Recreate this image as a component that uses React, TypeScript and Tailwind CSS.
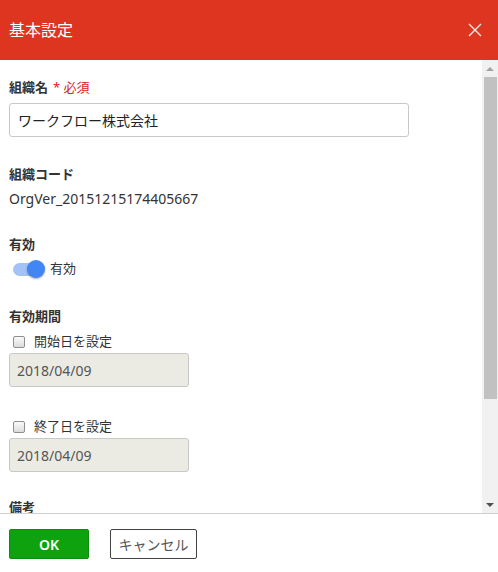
import React from "react";

const font = { fontFamily: '"Noto Sans", "Noto Sans CJK JP", sans-serif' };

const Label: React.FC<{ children: React.ReactNode }> = ({ children }) => (
  <div className="h-5 flex items-center text-[13px] font-bold text-[#333]">{children}</div>
);

const DateBox: React.FC<{ value: string }> = ({ value }) => (
  <div className="w-[180px] h-[34px] mt-[1px] flex items-center pl-[7px] bg-[#ebebe4] border border-[#c8c8c8] rounded-[3px] text-[14px] text-[#555]">
    {value}
  </div>
);

const CheckRow: React.FC<{ text: string }> = ({ text }) => (
  <div className="h-5 flex items-center">
    <span className="ml-[4px] w-[12px] h-[12px] rounded-[2px] border border-[#8f8f8f] bg-gradient-to-b from-[#fafafa] to-[#dcdcdc]" />
    <span className="ml-[9px] text-[13px] text-[#333]">{text}</span>
  </div>
);

export default function App() {
  return (
    <div className="w-[498px] h-[572px] bg-white flex flex-col overflow-hidden" style={font}>
      {/* ヘッダー */}
      <div className="h-[60px] shrink-0 bg-[#dd3520] flex items-center justify-between pl-[9px] pr-[16px]">
        <span className="text-white text-[16px] leading-none">基本設定</span>
        <svg width="14" height="14" viewBox="0 0 14 14" className="opacity-90">
          <path d="M1 1L13 13M13 1L1 13" stroke="#fff" strokeWidth="1.4" />
        </svg>
      </div>

      {/* 本文 + スクロールバー */}
      <div className="h-[453px] shrink-0 flex">
        <div className="flex-1 overflow-hidden pl-[9px] pt-[18px]">
          <Label>
            組織名<span className="ml-[5px] text-[#e02020] font-normal">* 必須</span>
          </Label>
          <div className="mt-[5px] w-[400px] h-[34px] flex items-center pl-[8px] border border-[#c8c8c8] rounded-[3px] text-[14px] text-[#222]">
            ワークフロー株式会社
          </div>

          <div className="mt-[28px]">
            <Label>組織コード</Label>
            <div className="mt-[3px] h-5 flex items-center text-[14px] text-[#333]">OrgVer_20151215174405667</div>
          </div>

          <div className="mt-[27px]">
            <Label>有効</Label>
            <div className="mt-[4px] h-5 flex items-center">
              <div className="relative ml-[4px] w-[32px] h-[20px] flex items-center">
                <div className="w-[30px] h-[13px] rounded-full bg-[#a3c2f7]" />
                <div className="absolute left-[14px] top-[1px] w-[18px] h-[18px] rounded-full bg-[#4285f4] shadow-[0_1px_2px_rgba(0,0,0,0.35)]" />
              </div>
              <span className="ml-[5px] text-[13px] text-[#333]">有効</span>
            </div>
          </div>

          <div className="mt-[28px]">
            <Label>有効期間</Label>
            <div className="mt-[5px]">
              <CheckRow text="開始日を設定" />
              <DateBox value="2018/04/09" />
            </div>
            <div className="mt-[30px]">
              <CheckRow text="終了日を設定" />
              <DateBox value="2018/04/09" />
            </div>
          </div>

          <div className="mt-[26px]">
            <Label>備考</Label>
            <div className="mt-[5px] w-[400px] h-[80px] border border-[#c8c8c8] rounded-[3px]" />
          </div>
        </div>

        <div className="w-[16px] shrink-0 bg-[#f1f1f1] flex flex-col items-center">
          <div className="h-[17px] flex items-center justify-center">
            <svg width="8" height="4" viewBox="0 0 8 4"><path d="M0 4L4 0L8 4Z" fill="#a3a3a3" /></svg>
          </div>
          <div className="w-[13px] ml-[1px] h-[322px] bg-[#c1c1c1]" />
          <div className="flex-1" />
          <div className="h-[17px] flex items-center justify-center">
            <svg width="8" height="4" viewBox="0 0 8 4"><path d="M0 0L8 0L4 4Z" fill="#505050" /></svg>
          </div>
        </div>
      </div>

      {/* フッター */}
      <div className="flex-1 border-t border-[#cfcfcf] pl-[9px] pt-[15px] flex items-start gap-[21px]">
        <button className="w-[80px] h-[30px] rounded-[2px] bg-[#0ea30e] border border-[#0b8f0b] text-white text-[14px] font-semibold">
          OK
        </button>
        <button className="w-[87px] h-[30px] rounded-[2px] bg-white border border-[#444] text-[#555] text-[14px]">
          キャンセル
        </button>
      </div>
    </div>
  );
}
